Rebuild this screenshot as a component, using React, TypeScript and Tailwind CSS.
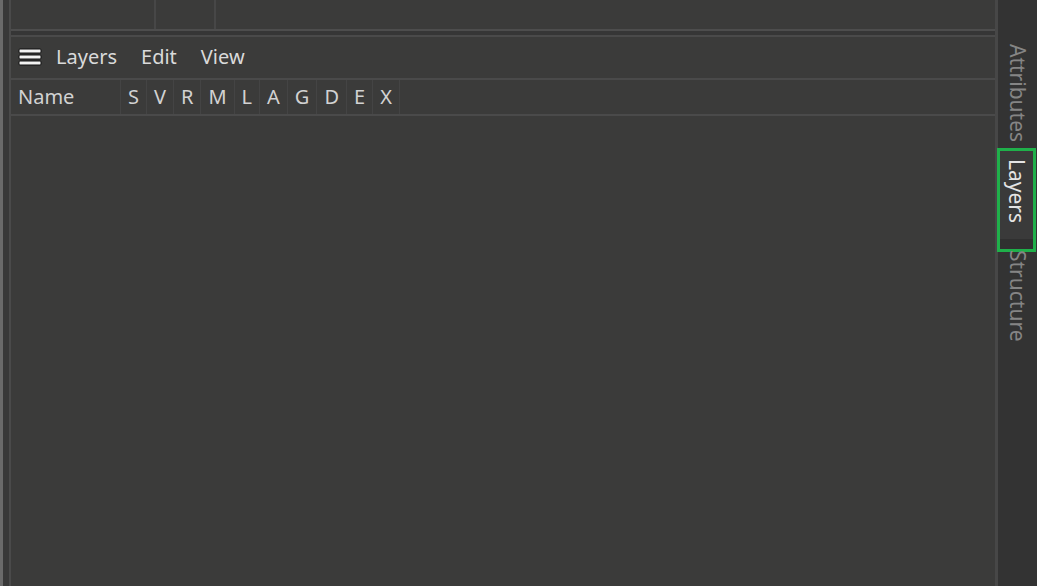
import React, { FC } from "react";

const columns = ["S", "V", "R", "M", "L", "A", "G", "D", "E", "X"];

const MenuIcon: FC = () => (
  <svg width="24" height="18" viewBox="0 0 24 18">
    {[1, 7, 13].map((y) => (
      <rect key={y} x="1" y={y} width="22" height="4" rx="1" fill="#f2f2f2" stroke="#111" strokeWidth="1" />
    ))}
  </svg>
);

const SideTab: FC<{ label: string; active?: boolean; className?: string }> = ({ label, active, className }) => (
  <div className={`flex justify-center ${className ?? ""}`}>
    <span
      className={`[writing-mode:vertical-rl] text-[21px] leading-none ${active ? "text-[#e4e4e4]" : "text-[#858585]"}`}
    >
      {label}
    </span>
  </div>
);

const App: FC = () => {
  return (
    <div
      className="flex w-[1037px] h-[586px] overflow-hidden bg-[#3b3b3a]"
      style={{ fontFamily: '"Noto Sans", "Open Sans", sans-serif' }}
    >
      {/* left edge */}
      <div className="w-[3px] bg-[#6a6a6a]" />
      <div className="w-[6px] bg-[#383838]" />

      {/* main panel */}
      <div className="flex-1 flex flex-col border-l-2 border-[#4a4a4a]">
        <div className="h-[31px] flex border-b-2 border-[#4d4d4d]">
          <div className="w-[145px] border-r-2 border-[#474747]" />
          <div className="w-[60px] border-r-2 border-[#474747]" />
          <div className="flex-1" />
        </div>
        <div className="h-[4px] bg-[#363636] border-b-2 border-[#4a4a4a] box-content" />

        <div className="h-[43px] flex items-center gap-[24px] pl-[7px] pb-[2px] border-b-2 border-[#4a4a4a] text-[20px] text-[#dadada]">
          <MenuIcon />
          <span className="-ml-[10px]">Layers</span>
          <span>Edit</span>
          <span>View</span>
        </div>

        <div className="h-[36px] flex border-b-2 border-[#4a4a4a] text-[20px] text-[#d2d2d2]">
          <div className="w-[110px] pl-[7px] flex items-center border-r border-[#444]">Name</div>
          {columns.map((c) => (
            <div key={c} className="px-[7px] flex items-center border-r border-[#444]">
              {c}
            </div>
          ))}
        </div>

        <div className="flex-1" />
      </div>

      {/* divider */}
      <div className="w-[3px] bg-[#474747]" />

      {/* sidebar */}
      <div className="w-[39px] bg-[#333333] flex flex-col">
        <div className="h-[38px]" />
        <SideTab label="Attributes" className="h-[110px] pt-[6px]" />
        <div className="h-[104px] border-[3px] border-[#1fb04a] -ml-[1px] mr-[1px] flex flex-col">
          <SideTab label="Layers" active className="flex-1 pt-[8px] bg-[#3a3a3a]" />
          <div className="h-[10px] bg-[#303030]" />
        </div>
        <SideTab label="Structure" className="-mt-[2px]" />
      </div>
    </div>
  );
};

export default App;
